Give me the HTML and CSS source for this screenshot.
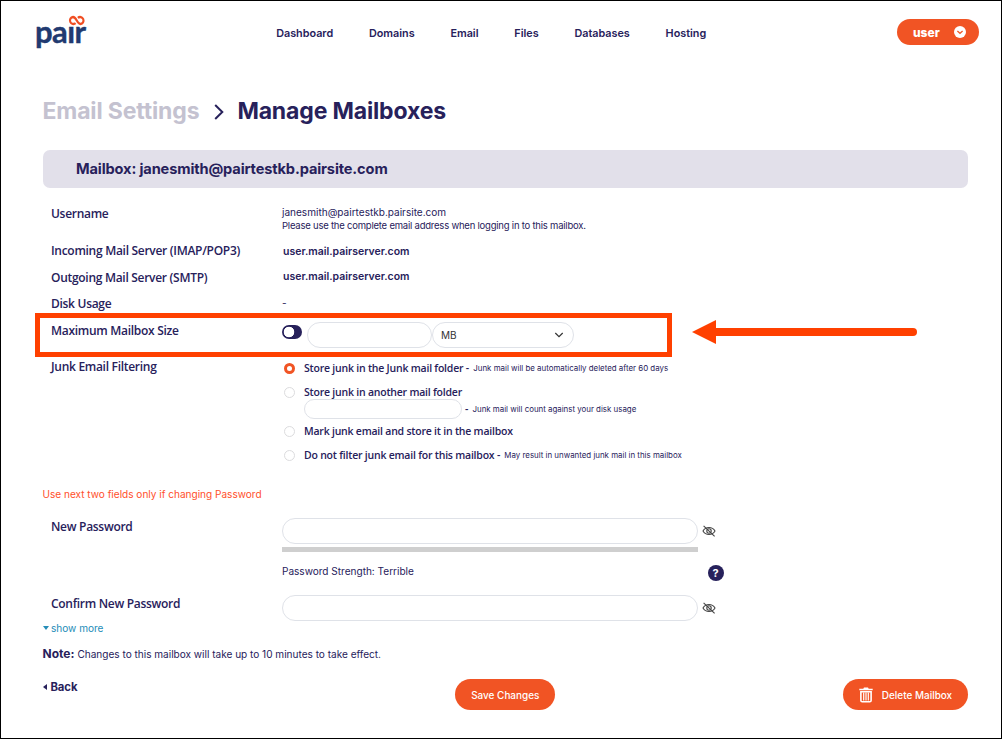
FILE: index.html
```html
<!DOCTYPE html>
<html lang="en">
<head>
<meta charset="utf-8">
<title>Manage Mailboxes</title>
<link rel="stylesheet" href="styles.css">
</head>
<body>
<div class="page">
  <header class="header">
    <a class="logo"><span>pair</span>
      <svg class="logo-mark" viewBox="0 0 17 10" preserveAspectRatio="none"><path d="M7.400 7.400A3.300 3.200 0 1 1 4.900 1.800C8.400 1.800 8.600 8.200 12.100 8.200A3.300 3.200 0 1 0 9.600 2.600"/></svg>
    </a>
    <nav class="nav"><a>Dashboard</a><a>Domains</a><a>Email</a><a>Files</a><a>Databases</a><a>Hosting</a></nav>
    <button class="user"><span>user</span>
      <svg viewBox="0 0 12 12"><circle cx="6" cy="6" r="6" fill="#fff"/><path d="M3.400 5L6 7.300L8.600 5" fill="none" stroke="#f15a29" stroke-width="1.300"/></svg>
    </button>
  </header>

  <main class="main">
    <h1 class="title"><span class="crumb">Email Settings</span>
      <svg viewBox="0 0 12 18"><path d="M2.200 2L9.300 9L2.200 16"/></svg>
      <span class="current">Manage Mailboxes</span></h1>
    <div class="banner">Mailbox: janesmith@pairtestkb.pairsite.com</div>

    <div class="row row-user"><div class="label">Username</div>
      <div class="value"><p class="addr">janesmith@pairtestkb.pairsite.com</p><p class="hint">Please use the complete email address when logging in to this mailbox.</p></div></div>
    <div class="row row-in"><div class="label">Incoming Mail Server (IMAP/POP3)</div><div class="value server">user.mail.pairserver.com</div></div>
    <div class="row row-out"><div class="label">Outgoing Mail Server (SMTP)</div><div class="value server">user.mail.pairserver.com</div></div>
    <div class="row row-disk"><div class="label">Disk Usage</div><div class="value">-</div></div>
    <div class="row row-max"><div class="label">Maximum Mailbox Size</div>
      <div class="value size"><span class="toggle"></span><span class="field size-field"></span>
        <span class="field unit"><span>MB</span><svg viewBox="0 0 10 6"><path d="M1.300 1L5 4.700L8.700 1"/></svg></span></div></div>
    <div class="row row-junk"><div class="label">Junk Email Filtering</div>
      <div class="value options">
        <div class="option"><span class="radio checked"></span><b>Store junk in the Junk mail folder - </b><small>Junk mail will be automatically deleted after 60 days</small></div>
        <div class="option"><span class="radio"></span><b>Store junk in another mail folder</b></div>
        <div class="folder"><span class="field"></span><b>- </b><small>Junk mail will count against your disk usage</small></div>
        <div class="option"><span class="radio"></span><b>Mark junk email and store it in the mailbox</b></div>
        <div class="option"><span class="radio"></span><b>Do not filter junk email for this mailbox - </b><small>May result in unwanted junk mail in this mailbox</small></div>
      </div></div>

    <p class="warning">Use next two fields only if changing Password</p>
    <div class="row row-new"><div class="label">New Password</div>
      <div class="value">
        <div class="secret"><span class="field"></span><svg class="eye" viewBox="0 0 14 12"><path d="M1 6C3.800 1.400 10.200 1.400 13 6C10.200 10.600 3.800 10.600 1 6Z"/><circle cx="7" cy="6" r="2.200"/><path d="M1.600 .8L12.600 11.300"/></svg></div>
        <div class="meter"></div>
        <div class="strength"><span>Password Strength: Terrible</span><span class="help">?</span></div>
      </div></div>
    <div class="row row-confirm"><div class="label">Confirm New Password</div>
      <div class="value"><div class="secret"><span class="field"></span><svg class="eye" viewBox="0 0 14 12"><path d="M1 6C3.800 1.400 10.200 1.400 13 6C10.200 10.600 3.800 10.600 1 6Z"/><circle cx="7" cy="6" r="2.200"/><path d="M1.600 .8L12.600 11.300"/></svg></div></div></div>
    <a class="more"><span class="caret-down"></span><span>show more</span></a>
    <p class="note"><b>Note:</b><span>Changes to this mailbox will take up to 10 minutes to take effect.</span></p>
    <div class="actions">
      <a class="back"><span class="caret-left"></span><span>Back</span></a>
      <button class="btn save">Save Changes</button>
      <button class="btn delete"><svg viewBox="0 0 14 16"><path d="M.3 1.800H4.300L5 .4H9L9.700 1.800H13.700V3.300H.3Z" fill="#fff"/><path d="M1.900 4.800V13.500Q1.900 14.800 3.200 14.800H10.800Q12.100 14.800 12.100 13.500V4.800Z" fill="none" stroke="#fff" stroke-width="1.600"/><path d="M4.700 5.500V13.500M7 5.500V13.500M9.300 5.500V13.500" stroke="#fff" stroke-width="1.200"/></svg><span>Delete Mailbox</span></button>
    </div>
  </main>
  <div class="highlight"></div>
  <svg class="arrow" viewBox="0 0 226 26"><path d="M0 13L24 1V25Z"/><rect x="16" y="9" width="209" height="8" rx="4"/></svg>
</div>
</body>
</html>
```
FILE: styles.css
```css
* { box-sizing: border-box; }
body { margin: 0; font-family: Inter, "Liberation Sans", sans-serif; color: #27215b; background: #fff; }
p, h1 { margin: 0; }
button { border: 0; padding: 0; color: #fff; background: #f15424; font-family: inherit; }
.page { position: relative; width: 1002px; height: 739px; border: 1px solid #000; overflow: hidden; }

.header { height: 64px; display: grid; grid-template-columns: 241.200px 1fr auto; align-items: center; padding: 0 22px 0 34px; }
.logo { position: relative; width: 54px; height: 38px; font: 700 31px/34px Lato, sans-serif; letter-spacing: -.6px; color: #213a70; -webkit-text-stroke: .4px #213a70; }
.logo-mark { position: absolute; left: 33px; top: 1px; width: 17.500px; height: 11px; background: #fff; fill: none; stroke: #f04e23; stroke-width: 2.100; }
.nav { display: flex; gap: 35.800px; font-size: 10.800px; font-weight: 600; }
.user { width: 82px; height: 26px; margin-top: -2px; border-radius: 13px; display: flex; align-items: center; justify-content: space-between; padding: 0 13px 0 16px; font-size: 12px; font-weight: 800; }
.user svg { width: 12px; height: 12px; }

.main { padding: 0 33px 0 41.500px; }
.title { display: flex; align-items: center; height: 84.500px; padding-top: 8px; font-size: 23px; font-weight: 700; letter-spacing: -.15px; }
.title svg { width: 12px; height: 18px; margin: 2px 12px 0 14px; fill: none; stroke: #27215b; stroke-width: 2; }
.crumb { color: #c4c2d0; }
.banner { height: 38.500px; display: flex; align-items: center; padding-left: 33.500px; border-radius: 7px; background: #e2e0ea; font-size: 14.600px; font-weight: 700; letter-spacing: -.13px; }

.row { display: grid; grid-template-columns: 231px 1fr; padding-left: 8.500px; }
.label { font: 600 12px/16px "Open Sans", "Noto Sans", sans-serif; letter-spacing: -.29px; }
.value { font-size: 10px; }
.field { display: block; border: 1px solid #dfe2e8; border-radius: 13px; background: #fff; }
.row-user { height: 50px; padding-top: 18px; }
.addr { font-size: 10.050px; line-height: 13px; }
.hint { font-size: 9.500px; line-height: 14px; letter-spacing: -.22px; }
.row-in { height: 26px; padding-top: 6px; }
.row-in .label { margin-top: -1px; }
.row-out { height: 26px; padding-top: 6px; }
.row-out .server { margin-top: -1px; }
.server { padding-left: 1px; font-size: 10.500px; font-weight: 600; line-height: 16px; }
.row-disk { height: 26px; padding-top: 6px; line-height: 14px; }
.row-max { height: 41px; padding-top: 6px; }
.row-max .label { padding-top: 1px; }
.size { display: flex; }
.toggle { width: 20px; height: 14px; border-radius: 7px; background: radial-gradient(circle at 7px 7px, #fff 5px, #27215b 5.600px); margin: 3px 5px 0 0; }
.size-field { width: 125px; height: 26px; }
.unit { width: 142px; height: 26px; display: flex; align-items: center; justify-content: space-between; padding: 0 9px 0 8px; color: #333; }
.unit svg { width: 10px; height: 6px; fill: none; stroke: #333; stroke-width: 1.200; }
.row-junk { height: 127px; padding-top: 2px; }
.options { padding: 1px 0 0 2px; font-family: "Open Sans", "Noto Sans", sans-serif; }
.option { display: flex; align-items: center; height: 16px; margin-bottom: 8px; white-space: pre; }
.options b { margin-right: 1.800px; font-size: 10.500px; font-weight: 600; letter-spacing: -.22px; }
.options small { font-family: Inter, sans-serif; font-size: 7.900px; }
.radio { width: 11px; height: 11px; margin-right: 9px; border: 1px solid #dcdcde; border-radius: 50%; }
.radio.checked { border: 3px solid #f15424; }
.folder { display: flex; align-items: center; height: 20px; margin: -9px 0 4px 20px; white-space: pre; }
.folder .field { width: 158px; height: 20px; margin-right: 3px; }

.warning { height: 34.500px; font-size: 10.050px; line-height: 20px; color: #ff4f2b; }
.row-new { height: 76.500px; }
.secret { display: flex; align-items: center; gap: 3.500px; margin-top: -.5px; }
.secret .field { width: 416px; height: 26px; }
.eye { width: 14px; height: 12px; fill: none; stroke: #444; stroke-width: 1.100; }
.meter { width: 416px; height: 5px; margin-top: 3px; background: #cfcfcf; }
.strength { width: 441.500px; display: flex; justify-content: space-between; margin-top: 13px; font-size: 10.050px; line-height: 12px; }
.help { width: 16px; height: 16px; border-radius: 50%; background: #27215b; color: #fff; font-size: 11px; font-weight: 700; line-height: 16px; text-align: center; }
.row-confirm { height: 24.500px; }
.row-confirm .label { padding-top: 1px; }
.more { display: flex; align-items: center; gap: 2.500px; height: 16px; color: #258db8; font-size: 10.050px; }
.caret-down { border: 3.500px solid transparent; border-top: 4px solid; border-bottom: 0; }
.note { display: flex; align-items: center; gap: 3px; height: 36px; font-size: 10.050px; }
.note b { font-size: 12px; }
.actions { display: grid; grid-template-columns: 1fr auto 1fr; align-items: center; height: 46px; }
.back { display: flex; align-items: center; gap: 4px; margin-top: -16px; font-size: 11.300px; font-weight: 700; letter-spacing: -.1px; }
.caret-left { border: 3.500px solid transparent; border-right: 4px solid; border-left: 0; }
.btn { height: 31px; border-radius: 16px; font-size: 9.950px; font-weight: 500; }
.save { width: 100px; }
.delete { width: 125px; justify-self: end; display: flex; align-items: center; justify-content: center; gap: 9px; }
.delete svg { width: 14px; height: 16px; }

.highlight { position: absolute; left: 34px; top: 312px; width: 637px; height: 44px; border: 5px solid #ff4000; }
.arrow { position: absolute; left: 691px; top: 318px; width: 226px; height: 26px; fill: #ff4000; }
```
